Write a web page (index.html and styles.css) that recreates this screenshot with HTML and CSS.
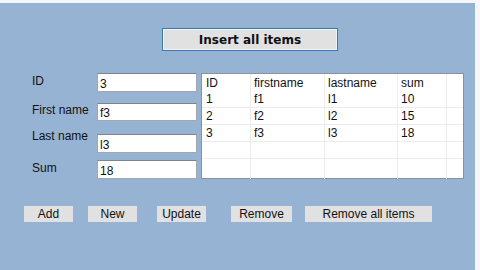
FILE: index.html
```html
<!DOCTYPE html>
<html lang="en">
<head>
    <meta charset="UTF-8">
    <title>Items</title>
    <link rel="stylesheet" href="styles.css">
</head>
<body>
    <div class="window">
        <div class="top-bar">
            <button class="insert-btn">Insert all items</button>
        </div>

        <div class="main">
            <div class="form">
                <div class="form-row row-id">
                    <label for="id">ID</label>
                    <input type="text" id="id" value="3">
                </div>
                <div class="form-row row-first">
                    <label for="firstName">First name</label>
                    <input type="text" id="firstName" value="f3">
                </div>
                <div class="form-row row-last">
                    <label for="lastName">Last name</label>
                    <input type="text" id="lastName" value="l3">
                </div>
                <div class="form-row row-sum">
                    <label for="sum">Sum</label>
                    <input type="text" id="sum" value="18">
                </div>
            </div>

            <div class="grid">
                <div class="cell head">ID</div>
                <div class="cell head">firstname</div>
                <div class="cell head">lastname</div>
                <div class="cell head">sum</div>
                <div class="cell head"></div>

                <div class="cell">1</div>
                <div class="cell">f1</div>
                <div class="cell">l1</div>
                <div class="cell">10</div>
                <div class="cell"></div>

                <div class="cell">2</div>
                <div class="cell">f2</div>
                <div class="cell">l2</div>
                <div class="cell">15</div>
                <div class="cell"></div>

                <div class="cell">3</div>
                <div class="cell">f3</div>
                <div class="cell">l3</div>
                <div class="cell">18</div>
                <div class="cell"></div>

                <div class="cell"></div>
                <div class="cell"></div>
                <div class="cell"></div>
                <div class="cell"></div>
                <div class="cell"></div>

                <div class="cell last"></div>
                <div class="cell last"></div>
                <div class="cell last"></div>
                <div class="cell last"></div>
                <div class="cell last"></div>
            </div>
        </div>

        <div class="actions">
            <button class="btn btn-add">Add</button>
            <button class="btn btn-new">New</button>
            <button class="btn btn-update">Update</button>
            <button class="btn btn-remove">Remove</button>
            <button class="btn btn-remove-all">Remove all items</button>
        </div>
    </div>
</body>
</html>
```

FILE: styles.css
```css
html, body {
    margin: 0;
    padding: 0;
    background-color: #f4f6f9;
}
body {
    font-family: "Liberation Sans", Arial, sans-serif;
    font-size: 12px;
    color: #111;
}
.window {
    width: 475px;
    height: 267px;
    margin-top: 3px;
    background-color: #97b3d3;
    box-sizing: border-box;
}
.top-bar {
    padding-top: 25px;
    padding-left: 162px;
}
.insert-btn {
    display: block;
    width: 176px;
    height: 23px;
    padding: 0;
    margin: 0;
    border: 1px solid #3a78b0;
    box-shadow: inset 0 0 0 1px #f4f4f4;
    background-color: #e1e1e1;
    font-family: "DejaVu Sans", Verdana, sans-serif;
    font-weight: bold;
    font-size: 12px;
    color: #111;
}

/* form + grid */
.main {
    display: flex;
    margin-top: 22px;
    height: 106px;
}
.form {
    width: 201px;
    padding-left: 32px;
    box-sizing: border-box;
}
.form-row {
    display: flex;
    align-items: flex-start;
}
.form-row label {
    width: 65px;
    line-height: 14px;
    margin-top: 1px;
}
.form-row input {
    width: 100px;
    height: 19px;
    box-sizing: border-box;
    margin: 0;
    padding: 2px 2px 0;
    border: 1px solid #a3a8b0;
    border-top-color: #7f848c;
    background: #fff;
    font-family: "Liberation Sans", Arial, sans-serif;
    font-size: 12px;
    color: #111;
}
.row-first {
    margin-top: 11px;
}
.row-first input {
    height: 18px;
}
.row-first label {
    margin-top: 0;
}
.row-last {
    margin-top: 13px;
}
.row-last label {
    margin-top: -5px;
}
.row-sum {
    margin-top: 7px;
}

.grid {
    display: grid;
    grid-template-columns: 49px 74px 73px 49px 1fr;
    width: 263px;
    height: 106px;
    box-sizing: border-box;
    border: 1px solid #8a929c;
    background: #fff;
    align-content: start;
}
.cell {
    box-sizing: border-box;
    height: 17px;
    line-height: 16px;
    padding-left: 3px;
    border-right: 1px solid #ececec;
    border-bottom: 1px solid #ececec;
    white-space: nowrap;
    color: #111;
}
.cell:nth-child(5n+1) {
    padding-left: 4px;
}
.cell:nth-child(5n) {
    border-right: none;
}
.cell.head {
    padding-top: 1px;
    border-bottom: none;
}
.cell.last {
    height: 20px;
    border-bottom: none;
}

/* bottom buttons */
.actions {
    display: flex;
    margin-top: 27px;
    padding-left: 24px;
}
.btn {
    height: 16px;
    margin: 0;
    padding: 0;
    border: none;
    background-color: #e1e1e1;
    font-family: "Liberation Sans", Arial, sans-serif;
    font-size: 12px;
    line-height: 16px;
    color: #111;
    text-align: center;
}
.btn-add { width: 49px; }
.btn-new { width: 49px; margin-left: 15px; }
.btn-update { width: 49px; margin-left: 20px; }
.btn-remove { width: 61px; margin-left: 25px; }
.btn-remove-all { width: 127px; margin-left: 13px; }
```
